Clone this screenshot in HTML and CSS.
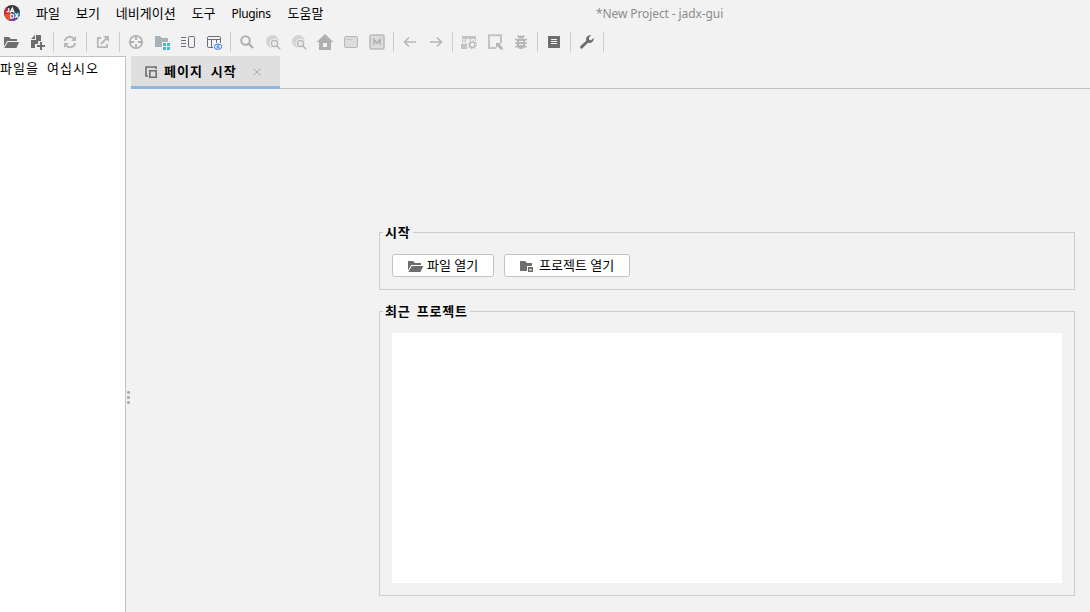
FILE: index.html
```html
<!DOCTYPE html>
<html lang="ko">
<head>
    <meta charset="UTF-8">
    <title>*New Project - jadx-gui</title>
    <link rel="stylesheet" href="styles.css">
</head>
<body>
    <header class="menubar">
        <svg class="logo" viewBox="0 0 16 16">
            <circle cx="8" cy="8" r="8" fill="#333b43"/>
            <path d="M8 8L0.3 10A8 8 0 0 1 2.4 2.3z" fill="#c62f3e"/>
            <path d="M8 8L0.3 9.5A8 8 0 0 0 6 15.7z" fill="#e9532d"/>
            <path d="M8 8L6 15.7A8 8 0 0 0 13 14z" fill="#7a3f98"/>
            <path d="M8 8L13 14A8 8 0 0 0 15.8 7z" fill="#287aa9"/>
            <path d="M4.8 3v3.6H2.6M6.3 7.8L8.3 3l2 4.8M7 6.4h3M6.8 9.3v3.8H8a1.9 1.9 0 0 0 0-3.8zM11.3 8.5l3 4.3M14.3 8.5l-3 4.3" fill="none" stroke="#fff" stroke-width="1.2"/>
        </svg>
        <nav class="menu">
            <span>파일</span>
            <span>보기</span>
            <span>네비게이션</span>
            <span>도구</span>
            <span class="plugins">Plugins</span>
            <span>도움말</span>
        </nav>
        <div class="title">*New Project - jadx-gui</div>
    </header>

    <div class="toolbar">
        <button><svg viewBox="0 0 16 16"><path d="M1 12.5V3h5l2 2h6v2H4.2z M4.8 8H16.2l-2.7 6H1.3z" fill="#6e6e6e"/></svg></button>
        <button><svg viewBox="0 0 16 16"><path d="M7 1h5v6H9v3H6v4H2V6h5z M6 1v4H2z M11 8h2v3h3v2h-3v3h-2v-3H8v-2h3z" fill="#6e6e6e"/></svg></button>
        <i class="sep"></i>
        <button><svg viewBox="0 0 16 16"><path d="M2.8 7A5.3 5.3 0 0 1 12.3 5M13.2 9A5.3 5.3 0 0 1 3.7 11" fill="none" stroke="#b7b7b7" stroke-width="2"/><path d="M14 2v5H9z M2 14V9h5z" fill="#b7b7b7"/></svg></button>
        <i class="sep"></i>
        <button><svg viewBox="0 0 16 16"><path d="M6 4H2.8v9.2H12V10M6 10l6-6" fill="none" stroke="#b7b7b7" stroke-width="1.8"/><path d="M8 2h6v6z" fill="#b7b7b7"/></svg></button>
        <i class="sep"></i>
        <button><svg viewBox="0 0 16 16"><circle cx="8" cy="8" r="6.2" fill="none" stroke="#afafaf" stroke-width="1.6"/><path d="M8 1v5M8 10v5M1 8h5M10 8h5" stroke="#afafaf" stroke-width="1.8"/></svg></button>
        <button><svg viewBox="0 0 16 16"><path d="M1 2h5l2 2h6v4H8v5H1z" fill="#a7b1b8"/><path d="M9 9h3v3H9zM13 9h3v3h-3zM9 13h3v3H9zM13 13h3v3h-3z" fill="#40b6e0"/></svg></button>
        <button><svg viewBox="0 0 16 16"><path d="M1 3.5h5M1 6.5h5M1 9.5h5M1 12.5h5" stroke="#6c707e"/><rect x="8.5" y="2.5" width="6" height="11" rx="1.3" fill="none" stroke="#6c707e"/></svg></button>
        <button><svg viewBox="0 0 16 16"><path d="M7 13.5H2.8a1.3 1.3 0 0 1-1.3-1.3V3.8a1.3 1.3 0 0 1 1.3-1.3h10.4a1.3 1.3 0 0 1 1.3 1.3V9M1.5 5.5h13M5.5 5.5v8M10.5 5.5V9" fill="none" stroke="#6c707e"/><ellipse cx="12" cy="12.7" rx="3.7" ry="2.6" fill="#edf3ff" stroke="#3574f0"/><circle cx="12" cy="12.7" r="1" fill="none" stroke="#3574f0"/></svg></button>
        <i class="sep"></i>
        <button><svg viewBox="0 0 16 16"><circle cx="6.5" cy="6.5" r="4.3" fill="none" stroke="#afafaf" stroke-width="2"/><path d="M9.6 9.6L14 14" stroke="#afafaf" stroke-width="2.2"/></svg></button>
        <button><svg viewBox="0 0 16 16"><circle cx="7.5" cy="7.5" r="6.5" fill="#d3d3d3"/><circle cx="9.5" cy="9.5" r="3.3" fill="#ededed" stroke="#f2f2f2" stroke-width="3"/><circle cx="9.5" cy="9.5" r="3.1" fill="#e9e9e9" stroke="#b5b5b5" stroke-width="1.3"/><path d="M12 12l3.2 3.2" stroke="#b5b5b5" stroke-width="1.6"/></svg></button>
        <button><svg viewBox="0 0 16 16"><circle cx="7.5" cy="7.5" r="6.5" fill="#d3d3d3"/><circle cx="9.5" cy="9.5" r="3.3" fill="#ededed" stroke="#f2f2f2" stroke-width="3"/><circle cx="9.5" cy="9.5" r="3.1" fill="#e9e9e9" stroke="#b5b5b5" stroke-width="1.3"/><path d="M12 12l3.2 3.2" stroke="#b5b5b5" stroke-width="1.6"/></svg></button>
        <button><svg viewBox="0 0 16 16"><path d="M8 0l8.3 8H14v8H2V8H-.3z M6 9v4h4V9z" fill="#afafaf" fill-rule="evenodd"/></svg></button>
        <button><svg viewBox="0 0 16 16"><rect x="1.5" y="2.5" width="13" height="11" rx="1.5" fill="#dcdcdc" stroke="#b7b7b7"/><path d="M3.5 5.5h2M6.5 5.5h2" stroke="#b7b7b7"/></svg></button>
        <button><svg viewBox="0 0 16 16"><rect x="1" y="1" width="14" height="14" rx="1.5" fill="#dcdcdc" stroke="#bababa" stroke-width="1.6"/><path d="M5 11V5.5l3 3.7 3-3.7V11" fill="none" stroke="#afafaf" stroke-width="1.5"/></svg></button>
        <i class="sep"></i>
        <button><svg viewBox="0 0 16 16"><path d="M14 8H3M7 3.5L2.5 8 7 12.5" fill="none" stroke="#b7b7b7" stroke-width="1.6"/></svg></button>
        <button><svg viewBox="0 0 16 16"><path d="M2 8h11M9 3.5L13.5 8 9 12.5" fill="none" stroke="#b7b7b7" stroke-width="1.6"/></svg></button>
        <i class="sep"></i>
        <button><svg viewBox="0 0 16 16"><path d="M1 2h14v3H1z M0 10h6v5H0z" fill="#c3c3c3"/><path d="M1.5 10V8.5a1.5 1.5 0 0 1 3 0V10M1.5 5v2M4.5 5v2M9.5 5v1.5M14.5 5v2" fill="none" stroke="#c3c3c3"/><circle cx="11.3" cy="10.8" r="2.7" fill="none" stroke="#b7b7b7" stroke-width="1.3"/><circle cx="11.3" cy="10.8" r="4" fill="none" stroke="#b7b7b7" stroke-width="1.2" stroke-dasharray="1.4 1.74"/></svg></button>
        <button><svg viewBox="0 0 16 16"><path d="M9 14H2V1.2h12V9" fill="none" stroke="#c3c3c3" stroke-width="2"/><path d="M9 9h5l-1.3 1.3 3 3.2v2.2h-1.9l-3.2-3.2L9 14z" fill="#b7b7b7"/></svg></button>
        <button><svg viewBox="0 0 16 16"><path d="M5 4.5a3 3 0 0 1 6 0z" fill="#b7b7b7"/><path d="M4 5h8v6a4 4 0 0 1-8 0z" fill="#b7b7b7"/><path d="M4.5 1.5l1.7 2M11.5 1.5l-1.7 2M2 5l3 1.5M14 5l-3 1.5M2 9h12M2.5 13.5L5 11M13.5 13.5L11 11" stroke="#b7b7b7" stroke-width="1.5"/><path d="M6 7.5h4M6 10.5h4" stroke="#f2f2f2"/></svg></button>
        <i class="sep"></i>
        <button><svg viewBox="0 0 16 16"><path d="M2 2h12v12H2z" fill="#6e6e6e"/><path d="M5 5.5h6M5 7.5h6M5 9.5h6" stroke="#f2f2f2"/></svg></button>
        <i class="sep"></i>
        <button><svg viewBox="0 0 16 16"><path d="M12.2 1.3L9.8 3.8l.4 2 2 .4 2.5-2.4a4.2 4.2 0 0 1-5.6 4.9L3.7 14.1a1.5 1.5 0 0 1-2.2-2.1L7.2 6.7a4.2 4.2 0 0 1 5-5.4z" fill="#6e6e6e"/></svg></button>
        <i class="sep"></i>
    </div>

    <main class="workspace">
        <aside class="tree">파일을 여십시오</aside>
        <div class="divider"><i></i><i></i><i></i></div>
        <section class="content">
            <div class="tabs">
                <div class="tab">
                    <svg viewBox="0 0 12 12"><path d="M3 10H1V1h10v2M4.8 4.8h6.4v6.4H4.8z" fill="none" stroke="#6e6e6e" stroke-width="1.6"/></svg>
                    <span>페이지 시작</span>
                    <svg class="close" viewBox="0 0 8 8"><path d="M.5 .5l7 7M7.5 .5l-7 7" stroke="#aaa"/></svg>
                </div>
            </div>
            <div class="start-page">
                <fieldset class="start">
                    <legend>시작</legend>
                    <button class="btn open-file">
                        <svg viewBox="0 0 16 16"><path d="M1 12.5V3h5l2 2h6v2H4.2z M4.8 8H16.2l-2.7 6H1.3z" fill="#6e6e6e"/></svg>
                        <span>파일 열기</span>
                    </button>
                    <button class="btn open-project">
                        <svg viewBox="0 0 16 16"><path d="M1 3h5l2 2h5v3H8v5H1z" fill="#6e6e6e"/><path d="M9 9h5v5H9z M10.5 11v1.5h2V11z" fill="#6e6e6e" fill-rule="evenodd"/></svg>
                        <span>프로젝트 열기</span>
                    </button>
                </fieldset>
                <fieldset class="recent">
                    <legend>최근 프로젝트</legend>
                    <div class="list"></div>
                </fieldset>
            </div>
        </section>
    </main>
</body>
</html>
```
FILE: styles.css
```css
* {
    margin: 0;
    padding: 0;
    box-sizing: border-box;
}
body {
    height: 100vh;
    display: flex;
    flex-direction: column;
    overflow: hidden;
    background-color: #f2f2f2;
    color: #000;
    font-family: "Noto Sans", "Noto Sans CJK KR", sans-serif;
    font-size: 13px;
}
svg {
    display: block;
    flex: none;
    overflow: visible;
}
button {
    font: inherit;
    border: none;
    background: none;
}
.menubar {
    height: 28px;
    display: flex;
    align-items: center;
    padding-left: 4px;
    line-height: 26px;
    white-space: nowrap;
}
.logo {
    width: 16px;
    height: 16px;
    margin-top: -3px;
}
.menu {
    width: 576px;
    padding-left: 16px;
    margin-top: -2px;
    display: flex;
    gap: 16px;
}
.menu .plugins {
    width: 40px;
    font-size: 12px;
    letter-spacing: -0.35px;
    padding-top: 1px;
}
.title {
    font-size: 12px;
    letter-spacing: -0.1px;
    color: #8c8c8c;
}
.toolbar {
    height: 28px;
    display: flex;
    align-items: center;
    margin-left: -2px;
}
.toolbar button {
    width: 26px;
    height: 26px;
    padding: 5px;
}
.toolbar svg {
    width: 16px;
    height: 16px;
}
.sep {
    width: 1px;
    height: 20px;
    margin: 0 3px;
    background-color: #cdcdcd;
}
.workspace {
    flex: 1;
    display: flex;
    min-height: 0;
}
.tree {
    width: 126px;
    background-color: #fff;
    border-top: 1px solid #c2c2c2;
    border-right: 1px solid #c2c2c2;
    font-family: "Noto Sans CJK KR", sans-serif;
    line-height: 22px;
    letter-spacing: 1.1px;
    word-spacing: 3px;
    white-space: nowrap;
}
.divider {
    width: 5px;
    padding-top: 126px;
    display: flex;
    flex-direction: column;
    align-items: center;
    justify-content: center;
    gap: 2px;
}
.divider i {
    width: 3px;
    height: 3px;
    border-radius: 1px;
    background-color: #afafaf;
}
.content {
    flex: 1;
    display: flex;
    flex-direction: column;
}
.tabs {
    height: 33px;
    border-bottom: 1px solid #c2c2c2;
}
.tab {
    width: 149px;
    height: 33px;
    display: flex;
    align-items: center;
    padding: 1px 0 0 14px;
    background-color: #dfdfdf;
    border-bottom: 3px solid #8fb6de;
    font-weight: bold;
    letter-spacing: 1.1px;
    word-spacing: 3px;
    white-space: nowrap;
}
.tab svg {
    width: 12px;
    height: 12px;
}
.tab span {
    width: 89px;
    margin: -2px 0 0 7px;
}
.tab .close {
    width: 8px;
    height: 8px;
}
.start-page {
    flex: 1;
    width: 696px;
    margin: 133px 0 0 248px;
}
fieldset {
    border: 1px solid #cdcdcd;
}
legend {
    height: 20px;
    line-height: 20px;
    margin-left: -9px;
    padding: 0 2px;
    font-weight: bold;
    letter-spacing: 0.8px;
    word-spacing: 2px;
}
.start {
    height: 68px;
    display: flex;
    gap: 10px;
    padding: 12px;
}
.recent {
    height: 295px;
    margin-top: 11px;
    padding: 12px;
}
.list {
    height: 250px;
    background-color: #fff;
}
.btn {
    height: 23px;
    display: flex;
    align-items: center;
    gap: 4px;
    padding-left: 14px;
    background-color: #fff;
    border: 1px solid #c2c2c2;
    border-radius: 3px;
    white-space: nowrap;
}
.btn svg {
    width: 16px;
    height: 16px;
}
.btn span {
    margin-top: -2px;
}
.open-file {
    width: 102px;
}
.open-project {
    width: 126px;
}
```
